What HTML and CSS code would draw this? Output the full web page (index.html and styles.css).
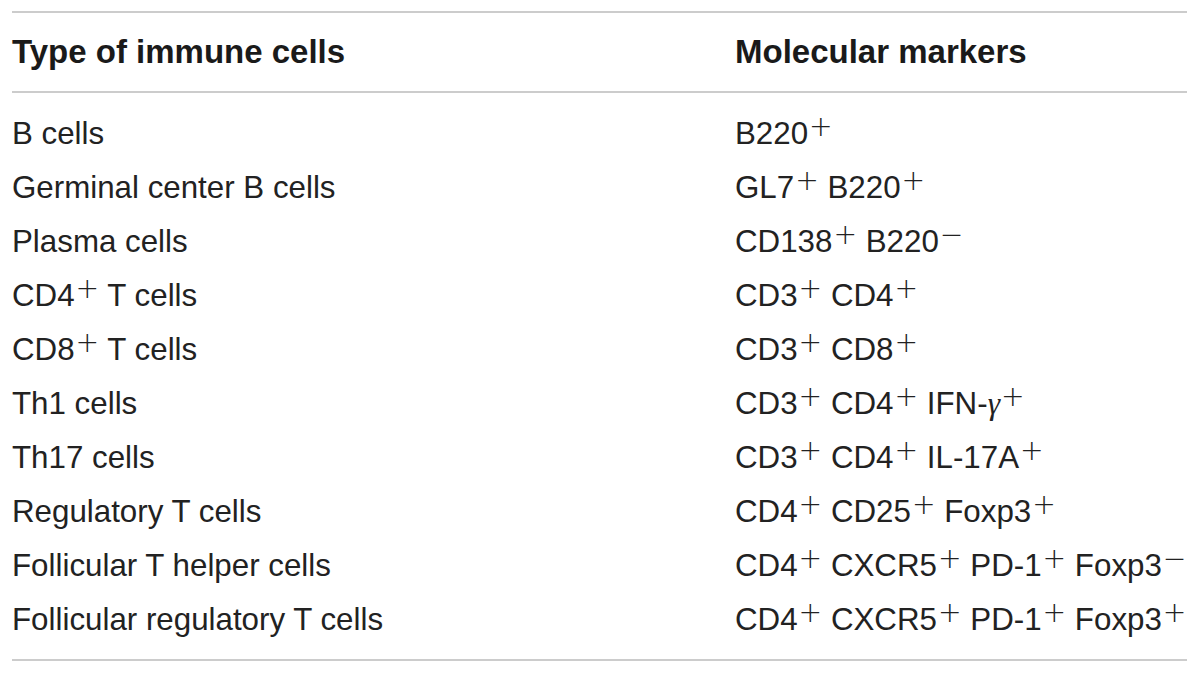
FILE: index.html
```html
<!DOCTYPE html>
<html lang="en">
<head>
<meta charset="utf-8">
<title>Immune cells and markers</title>
<link rel="stylesheet" href="styles.css">
</head>
<body>
<div class="table">
  <div class="head">
    <div class="cell">Type of immune cells</div>
    <div class="cell">Molecular markers</div>
  </div>
  <div class="body">
    <div class="cell">B cells</div>
    <div class="cell">B220<span class="sup">+</span></div>
    <div class="cell">Germinal center B cells</div>
    <div class="cell">GL7<span class="sup">+</span> B220<span class="sup">+</span></div>
    <div class="cell">Plasma cells</div>
    <div class="cell">CD138<span class="sup">+</span> B220<span class="sup">−</span></div>
    <div class="cell">CD4<span class="sup">+</span> T cells</div>
    <div class="cell">CD3<span class="sup">+</span> CD4<span class="sup">+</span></div>
    <div class="cell">CD8<span class="sup">+</span> T cells</div>
    <div class="cell">CD3<span class="sup">+</span> CD8<span class="sup">+</span></div>
    <div class="cell">Th1 cells</div>
    <div class="cell">CD3<span class="sup">+</span> CD4<span class="sup">+</span> IFN-<span class="greek">γ</span><span class="sup">+</span></div>
    <div class="cell">Th17 cells</div>
    <div class="cell">CD3<span class="sup">+</span> CD4<span class="sup">+</span> IL-17A<span class="sup">+</span></div>
    <div class="cell">Regulatory T cells</div>
    <div class="cell">CD4<span class="sup">+</span> CD25<span class="sup">+</span> Foxp3<span class="sup">+</span></div>
    <div class="cell">Follicular T helper cells</div>
    <div class="cell">CD4<span class="sup">+</span> CXCR5<span class="sup">+</span> PD-1<span class="sup">+</span> Foxp3<span class="sup">−</span></div>
    <div class="cell">Follicular regulatory T cells</div>
    <div class="cell">CD4<span class="sup">+</span> CXCR5<span class="sup">+</span> PD-1<span class="sup">+</span> Foxp3<span class="sup">+</span></div>
  </div>
</div>
</body>
</html>
```
FILE: styles.css
```css
html, body {
  margin: 0;
  padding: 0;
  background: #ffffff;
}

body {
  font-family: "Liberation Sans", Arial, sans-serif;
  color: #222222;
}

.table {
  width: 1175px;
  margin: 11px 0 0 12px;
  border-top: 2px solid #cccccc;
  border-bottom: 2px solid #cccccc;
}

.head {
  display: grid;
  grid-template-columns: 723px 1fr;
  padding: 12px 0 12px;
  border-bottom: 2px solid #cccccc;
  font-weight: bold;
  font-size: 33px;
  line-height: 54px;
  color: #1a1a1a;
}

.body {
  display: grid;
  grid-template-columns: 723px 1fr;
  padding: 14px 0 12px;
  font-size: 31.3px;
  line-height: 54px;
}

.cell {
  white-space: nowrap;
}

.sup {
  font-family: "DejaVu Sans", sans-serif;
  font-weight: 200;
  font-size: 0.9em;
  vertical-align: 0.3em;
  line-height: 0;
  margin-left: 1px;
}

.greek {
  font-family: "Liberation Serif", "Times New Roman", serif;
  font-style: italic;
}
```
